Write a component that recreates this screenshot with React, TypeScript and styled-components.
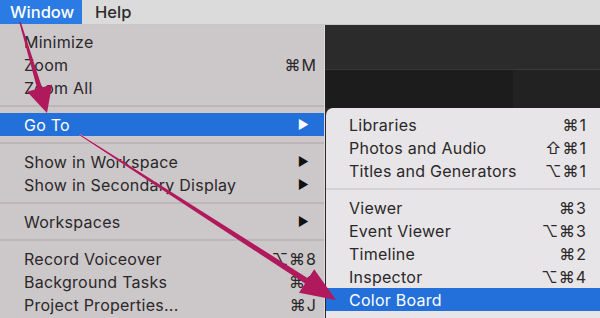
import React from "react";
import styled, { createGlobalStyle } from "styled-components";

const GlobalStyle = createGlobalStyle`
  html, body { margin: 0; padding: 0; background: #2a292a; overflow: hidden; }
  * { box-sizing: border-box; }
`;

const FONT = `Inter, "DejaVu Sans", "Liberation Sans", sans-serif`;

const Screen = styled.div`
  position: relative;
  width: 600px;
  height: 318px;
  overflow: hidden;
  display: grid;
  grid-template-rows: 25px 1fr;
  font-family: ${FONT};
  background: #2a292a;
`;

const MenuBar = styled.div`
  display: flex;
  align-items: stretch;
  background: #dcdbdb;
  border-bottom: 1px solid #c9c6c7;
`;

const MenuTitle = styled.div<{ $active?: boolean }>`
  display: flex;
  align-items: center;
  font-size: 16.5px;
  font-weight: 500;
  color: ${(p) => (p.$active ? "#ffffff" : "#2b2b2b")};
  background: ${(p) => (p.$active ? "#2a7be3" : "transparent")};
  width: ${(p) => (p.$active ? "82px" : "auto")};
  padding-left: ${(p) => (p.$active ? "10px" : "13px")};
`;

const Body = styled.div`
  display: flex;
  min-height: 0;
`;

const LeftMenu = styled.div`
  width: 325px;
  flex: none;
  background: #ccc7c9;
  border-right: 1px solid #dedadc;
  padding-top: 5px;
`;

const RightArea = styled.div`
  flex: 1;
  display: flex;
  flex-direction: column;
  background: #2b2a2b;
`;

const DarkTop = styled.div`
  height: 83px;
  display: flex;
  flex-direction: column;
`;

const DarkUpper = styled.div`
  height: 45px;
  background: #2c2b2c;
  border-bottom: 1px solid #3a393a;
`;

const DarkLower = styled.div`
  flex: 1;
  display: flex;
  background: #232223;
`;

const DarkBlock = styled.div`
  width: 187px;
  margin-left: 1px;
  background: #1d1c1d;
`;

const SubMenu = styled.div`
  flex: 1;
  margin-left: 1px;
  background: #e7e5e7;
  border-top-left-radius: 7px;
  padding-top: 5px;
`;

const Row = styled.div<{ $active?: boolean; $sub?: boolean }>`
  height: 23px;
  display: grid;
  grid-template-columns: 1fr auto;
  align-items: center;
  padding: 0 ${(p) => (p.$sub ? "13px" : "7px")} 0 ${(p) => (p.$sub ? "23px" : "24px")};
  font-size: 16px;
  letter-spacing: 0.25px;
  color: ${(p) => (p.$active ? "#ffffff" : "#2a2829")};
  background: ${(p) => (p.$active ? "#2470da" : "transparent")};
  white-space: nowrap;
`;

const Shortcut = styled.span`
  font-size: 16px;
  letter-spacing: 1px;
  text-align: right;
`;

const SubArrow = styled.span<{ $active?: boolean }>`
  font-size: 12px;
  padding-right: 8px;
  color: ${(p) => (p.$active ? "#ffffff" : "#111")};
`;

const Separator = styled.div<{ $sub?: boolean }>`
  height: 14px;
  display: flex;
  align-items: center;
  &::after {
    content: "";
    flex: 1;
    height: 2px;
    background: ${(p) => (p.$sub ? "#d3d1d4" : "#bcb6b9")};
  }
`;

const Overlay = styled.svg`
  position: absolute;
  left: 0;
  top: 0;
  pointer-events: none;
`;

type Item =
  | { sep: true }
  | { label: string; key?: string; sub?: boolean; active?: boolean };

const leftItems: Item[] = [
  { label: "Minimize" },
  { label: "Zoom", key: "⌘M" },
  { label: "Zoom All" },
  { sep: true },
  { label: "Go To", sub: true, active: true },
  { sep: true },
  { label: "Show in Workspace", sub: true },
  { label: "Show in Secondary Display", sub: true },
  { sep: true },
  { label: "Workspaces", sub: true },
  { sep: true },
  { label: "Record Voiceover", key: "⌥⌘8" },
  { label: "Background Tasks", key: "⌘9" },
  { label: "Project Properties...", key: "⌘J" },
];

const subItems: Item[] = [
  { label: "Libraries", key: "⌘1" },
  { label: "Photos and Audio", key: "⇧⌘1" },
  { label: "Titles and Generators", key: "⌥⌘1" },
  { sep: true },
  { label: "Viewer", key: "⌘3" },
  { label: "Event Viewer", key: "⌥⌘3" },
  { label: "Timeline", key: "⌘2" },
  { label: "Inspector", key: "⌥⌘4" },
  { label: "Color Board", active: true },
];

function renderItems(items: Item[], sub: boolean) {
  return items.map((it, i) => {
    if ("sep" in it) return <Separator key={i} $sub={sub} />;
    return (
      <Row key={i} $active={it.active} $sub={sub}>
        <span>{it.label}</span>
        {it.sub ? (
          <SubArrow $active={it.active}>▶</SubArrow>
        ) : (
          <Shortcut>{it.key ?? ""}</Shortcut>
        )}
      </Row>
    );
  });
}

function arrowPoints(
  x1: number,
  y1: number,
  x2: number,
  y2: number,
  w0: number,
  w1: number,
  headLen: number,
  headHalf: number
) {
  const dx = x2 - x1;
  const dy = y2 - y1;
  const len = Math.hypot(dx, dy);
  const ux = dx / len;
  const uy = dy / len;
  const px = -uy;
  const py = ux;
  const bx = x2 - ux * headLen;
  const by = y2 - uy * headLen;
  const pts = [
    [x1 + (px * w0) / 2, y1 + (py * w0) / 2],
    [bx + (px * w1) / 2, by + (py * w1) / 2],
    [bx + px * headHalf, by + py * headHalf],
    [x2, y2],
    [bx - px * headHalf, by - py * headHalf],
    [bx - (px * w1) / 2, by - (py * w1) / 2],
    [x1 - (px * w0) / 2, y1 - (py * w0) / 2],
  ];
  return pts.map((p) => `${p[0].toFixed(1)},${p[1].toFixed(1)}`).join(" ");
}

export default function App() {
  return (
    <>
      <GlobalStyle />
      <Screen>
        <MenuBar>
          <MenuTitle $active>Window</MenuTitle>
          <MenuTitle>Help</MenuTitle>
        </MenuBar>
        <Body>
          <LeftMenu>{renderItems(leftItems, false)}</LeftMenu>
          <RightArea>
            <DarkTop>
              <DarkUpper />
              <DarkLower>
                <DarkBlock />
              </DarkLower>
            </DarkTop>
            <SubMenu>{renderItems(subItems, true)}</SubMenu>
          </RightArea>
        </Body>
        <Overlay width="600" height="318" viewBox="0 0 600 318">
          <line x1="80" y1="135" x2="200" y2="213" stroke="#ffffff" strokeWidth="2" opacity="0.8" />
          <polygon
            points={arrowPoints(20, 22, 47, 113, 1.5, 5, 26, 13)}
            fill="#b1195d"
          />
          <polygon
            points={arrowPoints(80, 135, 336, 300, 1.2, 6, 35, 14)}
            fill="#b1195d"
          />
        </Overlay>
      </Screen>
    </>
  );
}
